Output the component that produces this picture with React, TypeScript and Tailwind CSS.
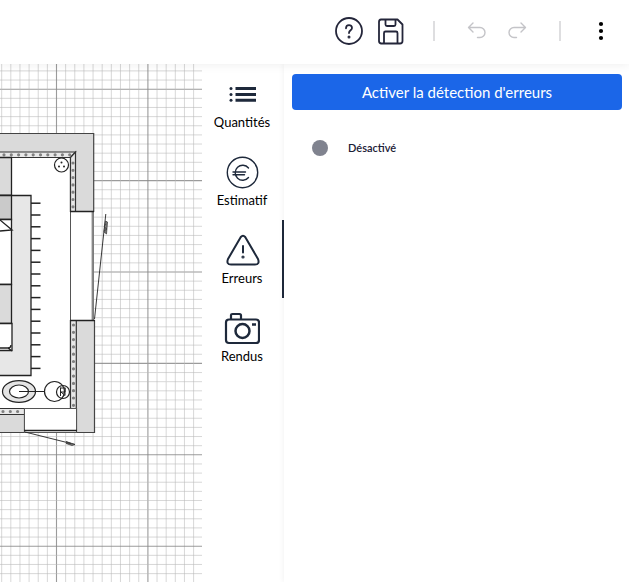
import React from "react";

const INK = "#1e293b";
const STEPS = Array.from({ length: 100 }, (_, i) => i - 40);
const TEETH = Array.from({ length: 15 }, (_, i) => 203.2 + i * 11.8);

function Grid() {
  return (
    <g>
      {STEPS.map((i) => {
        const major = i % 10 === 0;
        const pos = i * 9.14;
        return (
          <g key={i} stroke={major ? "#8a8a8a" : "#b9b9b9"} strokeWidth={major ? 1.1 : 1} opacity={major ? 0.85 : 0.55}>
            <line x1={56.5 + pos} x2={56.5 + pos} y1="0" y2="1200" />
            <line x1="-400" x2="400" y1={272 + pos} y2={272 + pos} />
          </g>
        );
      })}
    </g>
  );
}

function FloorPlan() {
  return (
    <svg className="h-full w-full" viewBox="0 64 202 518" preserveAspectRatio="xMaxYMin slice" role="img" aria-label="Plan">
      <rect x="-400" y="0" width="800" height="1200" fill="#fff" />
      <Grid />
      <path d="M-5 133.5H94V432.5H-5Z" fill="#fff" />
      {/* outer walls */}
      <g fill="#dadada" stroke="#444" strokeWidth="1.2">
        <path d="M-5 133.5H93.7V211.5H70.5V157.5H-5Z" />
        <path d="M70.5 320.5H94.5V432.5H76.5V408.5H70.5Z" />
        <path d="M-5 408.5H24.5V432.5H-5Z" />
      </g>
      {/* insulation */}
      <g fill="#e8e8e8" stroke="#333" strokeWidth="1.2">
        <path d="M-5 152H75.5L70.5 157.5H-5Z" />
        <path d="M75.5 152V211.5H70.5V157.5Z" />
        <path d="M70.5 320.5H76.3V408.5H70.5Z" />
        <path d="M-5 408.5H24.5V414.5H-5Z" />
      </g>
      <g stroke="#808080" strokeWidth="3.2" strokeLinecap="round" strokeDasharray="0 7.3" fill="none">
        <path d="M4 154.8H72" />
        <path d="M73 163V211" />
        <path d="M73.5 325V407" />
        <path d="M3 411.5H23" />
      </g>
      {/* windows and doors */}
      <g fill="#fff" stroke="#555" strokeWidth="1">
        <path d="M70.5 211.5H93.5V320.5H70.5Z" />
        <path d="M24.5 408.5H76.5V432.5H24.5Z" />
      </g>
      <path d="M92.7 212V320" stroke="#888" strokeWidth="2.2" />
      <path d="M70 211.5H94M70 320.5H95M24 430.5H77" stroke="#222" strokeWidth="1.3" />
      <path d="M94.5 319L105.800 214M25 432L75 444.5" stroke="#222" strokeWidth="0.9" fill="none" />
      <path d="M105.5 221l2 1-1 12-2.500-2zM106 224l-2 3 3 2-3 2M66 441.500l9 3-3 1-6-2 5 0z" stroke="#333" strokeWidth="0.7" fill="#777" />
      {/* worktops */}
      <g stroke="#222" strokeWidth="1.3">
        <path d="M-5 157.5H11.5V195.5H-5Z" fill="#dadada" />
        <path d="M-5 195.5H31V375.5H-5Z" fill="#e7e7e7" />
        <path d="M-5 195.5H11.5V219.5H-5Z" fill="#cacaca" />
        <path d="M-5 219.5H11.5V284.5H-5Z" fill="#fff" />
        <path d="M-5 284.5H11.5V323.5H-5Z" fill="#dadada" />
        <path d="M-5 323.5H12V350.5H-5Z" fill="#fff" />
        <path d="M0 220L12 230L0 231M0 348H8Q11 348 11 345M8 348L12 351" fill="none" />
      </g>
      <g stroke="#222" strokeWidth="1.5">
        {TEETH.map((y) => (
          <line key={y} x1="31" x2="40.5" y1={y} y2={y} />
        ))}
      </g>
      {/* sanitary fixtures */}
      <g fill="#fff" stroke="#222" strokeWidth="1.2">
        <circle cx="61.5" cy="165" r="7" />
        <ellipse cx="19" cy="391.5" rx="16.5" ry="10.8" fill="#e4e4e4" />
        <ellipse cx="19" cy="391.5" rx="9.5" ry="6.5" />
        <circle cx="54.500" cy="391.5" r="10" />
        <circle cx="63" cy="392" r="6.5" fill="none" />
        <path d="M19 391.5H44M60.500 387.500v8.500M60.500 388h4.500v4h-4.500M61 392l4 3.500M65 387.500v8" fill="none" strokeWidth="1" />
      </g>
      <g fill="#222">
        <circle cx="61.5" cy="162.5" r="1" />
        <circle cx="59" cy="166.5" r="1" />
        <circle cx="64" cy="166.5" r="1" />
      </g>
    </svg>
  );
}

function HelpIcon() {
  return (
    <svg className="size-7" viewBox="0 0 28 28" fill="none" stroke="#24263a" strokeWidth="1.8" strokeLinecap="round" aria-hidden="true">
      <circle cx="14" cy="14" r="13" />
      <path d="M11 11.3C11 7 17 7 17 11c0 2.4-3 2.2-3 5" />
      <circle cx="14" cy="20" r="0.6" />
    </svg>
  );
}

function SaveIcon() {
  return (
    <svg className="size-7" viewBox="0 0 28 28" fill="none" stroke="#24263a" strokeWidth="1.8" strokeLinejoin="round" aria-hidden="true">
      <path d="M4 2.500H20.500L25.500 7.500V24a2.500 2.500 0 0 1-2.500 2.500H4A2.500 2.500 0 0 1 2 24V5Q2 2.500 4 2.500Z" />
      <path d="M8.500 3V7.500Q8.500 9 10 9H17Q18.500 9 18.500 7.500V3M7 26V16Q7 14.500 8.500 14.500H19Q20.500 14.500 20.500 16V26" />
    </svg>
  );
}

function UndoIcon() {
  return (
    <svg className="size-5" viewBox="0 0 20 20" fill="none" stroke="#c4c4c8" strokeWidth="1.4" strokeLinecap="round" strokeLinejoin="round" aria-hidden="true">
      <path d="M6 2L1.5 6.500L6 11M2 6.500H13a5 5 0 0 1 0 10H10.500" />
    </svg>
  );
}

function RedoIcon() {
  return (
    <svg className="size-5" viewBox="0 0 20 20" fill="none" stroke="#c4c4c8" strokeWidth="1.4" strokeLinecap="round" strokeLinejoin="round" aria-hidden="true">
      <path d="M14 2L18.500 6.500L14 11M18 6.500H7a5 5 0 0 0 0 10H9.500" />
    </svg>
  );
}

function ListIcon() {
  return (
    <svg className="size-9" viewBox="0 0 36 36" fill={INK} aria-hidden="true">
      <path d="M11.500 11H32v3H11.500zM11.500 17H32v3H11.500zM11.500 22.800H32v3H11.500z" />
      <circle cx="7" cy="12.5" r="1.5" />
      <circle cx="7" cy="18.5" r="1.5" />
      <circle cx="7" cy="24.3" r="1.5" />
    </svg>
  );
}

function EuroIcon() {
  return (
    <svg className="size-9" viewBox="0 0 36 36" fill="none" stroke={INK} strokeWidth="1.4" strokeLinecap="round" aria-hidden="true">
      <circle cx="18.5" cy="18.5" r="15.2" />
      <path d="M24.500 14A7.500 7.500 0 1 0 24.500 23.500M9 18H21.500M9 20.800H20.500" />
    </svg>
  );
}

function WarningIcon() {
  return (
    <svg className="size-9" viewBox="0 0 36 36" fill="none" stroke={INK} strokeWidth="2" strokeLinecap="round" strokeLinejoin="round" aria-hidden="true">
      <path d="M16.800 5Q19 2.500 21.200 5L34 27Q36 32.500 31 32.500H7Q2 32.500 4 27Z" />
      <path d="M19 14V20.500" />
      <circle cx="19" cy="25" r="0.6" />
    </svg>
  );
}

function CameraIcon() {
  return (
    <svg className="size-9" viewBox="0 0 36 36" fill="none" stroke={INK} strokeWidth="2.2" strokeLinejoin="round" aria-hidden="true">
      <rect x="2" y="9.5" width="33" height="23.5" rx="3" />
      <path d="M7 9V5Q7 4 8.500 4H15.500Q17 4 17 5.500V9" />
      <circle cx="18.5" cy="21" r="7" strokeWidth="2.5" />
      <path d="M28 14.500H32" strokeWidth="2.5" />
    </svg>
  );
}

const TABS = [
  { label: "Quantités", Icon: ListIcon },
  { label: "Estimatif", Icon: EuroIcon },
  { label: "Erreurs", Icon: WarningIcon },
  { label: "Rendus", Icon: CameraIcon },
];

export default function App() {
  const [active, setActive] = React.useState("Erreurs");
  return (
    <div className="flex h-screen flex-col overflow-hidden bg-white font-['Lato','Open_Sans',sans-serif]">
      <header className="z-10 flex h-16 shrink-0 items-center justify-end bg-white pr-4 pb-0.5 shadow-[0_0_10px_rgba(0,0,0,0.08)]">
        <button aria-label="Aide"><HelpIcon /></button>
        <button className="ml-3.5" aria-label="Enregistrer"><SaveIcon /></button>
        <div className="ml-7 h-5 w-0.5 bg-[#dedee0]" />
        <button className="ml-8" aria-label="Annuler"><UndoIcon /></button>
        <button className="ml-5" aria-label="Rétablir"><RedoIcon /></button>
        <div className="ml-8 h-5 w-0.5 bg-[#dedee0]" />
        <button className="ml-7" aria-label="Plus d'options">
          <svg className="size-6" viewBox="0 0 24 24" aria-hidden="true">
            <circle cx="12" cy="5" r="2.1" />
            <circle cx="12" cy="12" r="2.1" />
            <circle cx="12" cy="19" r="2.1" />
          </svg>
        </button>
      </header>
      <main className="flex min-h-0 flex-1">
        <div className="min-w-0 flex-1">
          <FloorPlan />
        </div>
        <nav className="flex w-[82px] shrink-0 flex-col">
          {TABS.map(({ label, Icon }) => (
            <button
              key={label}
              onClick={() => setActive(label)}
              aria-pressed={active === label}
              className={
                "flex h-[78px] flex-col items-center border-r-2 pt-3 text-[13px] leading-5 text-black " +
                (active === label ? "border-[#1e293b]" : "border-transparent")
              }
            >
              <Icon />
              <span>{label}</span>
            </button>
          ))}
        </nav>
        <section className="w-[345px] shrink-0 py-2.5 pr-[7px] pl-2 shadow-[0_0_6px_rgba(0,0,0,0.07)]">
          <button className="h-9 w-full rounded bg-[#1b66e8] text-[15px] text-white">Activer la détection d'erreurs</button>
          <div className="mt-7 flex items-center gap-5 pl-5">
            <span className="size-4 rounded-full bg-[#80838f]" />
            <span className="text-[11px] leading-5 font-semibold text-[#1b2036]">Désactivé</span>
          </div>
        </section>
      </main>
    </div>
  );
}
